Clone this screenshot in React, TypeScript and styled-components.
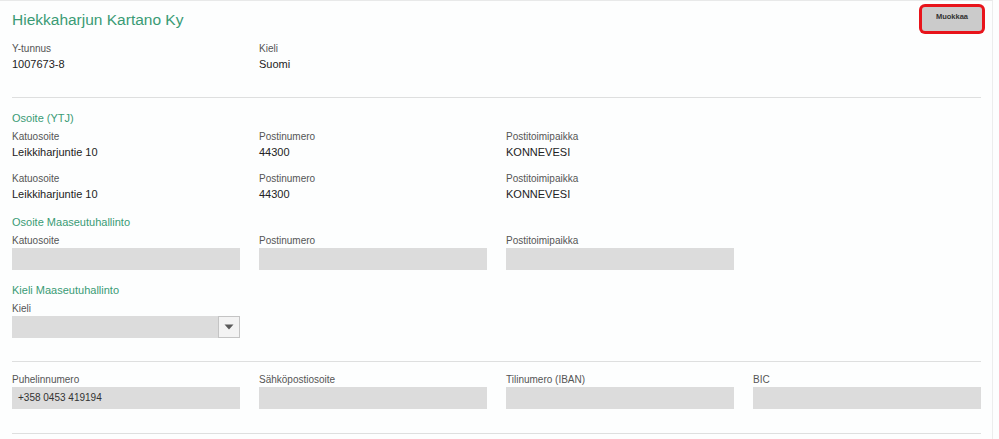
import React from "react";
import styled, { createGlobalStyle } from "styled-components";

const Global = createGlobalStyle`
  html, body { margin: 0; padding: 0; background: #fdfefe; }
  body { font-family: "Liberation Sans", Arial, sans-serif; }
`;

const GREEN = "#3a9b75";

const Page = styled.div`
  width: 969px;
  padding: 0 11px 0 12px;
  border-top: 1px solid #e8e9e9;
  border-right: 1px solid #eceded;
  min-height: 438px;
  background: #fdfefe;
`;

const Header = styled.div`
  display: flex;
  justify-content: space-between;
  align-items: flex-start;
  padding-top: 6px;
`;

const Title = styled.h1`
  margin: 3px 0 0 0;
  font-size: 15.5px;
  line-height: 20px;
  font-weight: normal;
  color: ${GREEN};
`;

const EditButton = styled.button`
  width: 60px;
  height: 24px;
  margin: 0 -1px 0 0;
  padding: 0 0 5px 0;
  border: none;
  border-radius: 3px;
  background: #cbcbcb;
  box-shadow: 0 0 0 3px #e8141b;
  font-family: "Liberation Sans", Arial, sans-serif;
  font-weight: bold;
  font-size: 7.5px;
  color: #333;
`;

const Grid = styled.div<{ $mt?: number }>`
  display: grid;
  grid-template-columns: repeat(4, 228px);
  column-gap: 19px;
  row-gap: 11px;
  margin-top: ${(p) => p.$mt ?? 0}px;
`;

const Field = styled.div`
  display: flex;
  flex-direction: column;
`;

const Label = styled.div`
  font-size: 10px;
  line-height: 15px;
  color: #555;
`;

const Value = styled.div`
  font-size: 11px;
  line-height: 16px;
  color: #222;
`;

const Divider = styled.div<{ $mt: number }>`
  height: 1px;
  background: #dedfdf;
  margin-top: ${(p) => p.$mt}px;
`;

const Heading = styled.h2`
  margin: 13px 0 4px 0;
  font-size: 11px;
  line-height: 14px;
  font-weight: normal;
  color: ${GREEN};
`;

const Input = styled.div`
  height: 22px;
  background: #dcdcdc;
  font-size: 10px;
  line-height: 22px;
  padding-left: 6px;
  color: #333;
`;

const Select = styled.div`
  height: 22px;
  background: #dcdcdc;
  display: flex;
  justify-content: flex-end;
`;

const ArrowBox = styled.div`
  width: 20px;
  height: 20px;
  border: 1px solid #c4c4c4;
  background: #f3f3f3;
  display: flex;
  align-items: center;
  justify-content: center;
`;

const Arrow = () => (
  <svg width="10" height="6" viewBox="0 0 10 6">
    <path d="M0.5 0.5 L9.5 0.5 L5 5.5 Z" fill="#5a5a5a" />
  </svg>
);

const ReadField = ({ label, value }: { label: string; value: string }) => (
  <Field>
    <Label>{label}</Label>
    <Value>{value}</Value>
  </Field>
);

const InputField = ({ label, value }: { label: string; value?: string }) => (
  <Field>
    <Label>{label}</Label>
    <Input>{value ?? ""}</Input>
  </Field>
);

export default function App() {
  return (
    <>
      <Global />
      <Page>
        <Header>
          <Title>Hiekkaharjun Kartano Ky</Title>
          <EditButton>Muokkaa</EditButton>
        </Header>
        <Grid $mt={10}>
          <ReadField label="Y-tunnus" value="1007673-8" />
          <ReadField label="Kieli" value="Suomi" />
        </Grid>
        <Divider $mt={25} />

        <Heading>Osoite (YTJ)</Heading>
        <Grid>
          <ReadField label="Katuosoite" value="Leikkiharjuntie 10" />
          <ReadField label="Postinumero" value="44300" />
          <ReadField label="Postitoimipaikka" value="KONNEVESI" />
          <div />
          <ReadField label="Katuosoite" value="Leikkiharjuntie 10" />
          <ReadField label="Postinumero" value="44300" />
          <ReadField label="Postitoimipaikka" value="KONNEVESI" />
        </Grid>

        <Heading>Osoite Maaseutuhallinto</Heading>
        <Grid>
          <InputField label="Katuosoite" />
          <InputField label="Postinumero" />
          <InputField label="Postitoimipaikka" />
        </Grid>

        <Heading>Kieli Maaseutuhallinto</Heading>
        <Grid>
          <Field>
            <Label>Kieli</Label>
            <Select>
              <ArrowBox>
                <Arrow />
              </ArrowBox>
            </Select>
          </Field>
        </Grid>

        <Divider $mt={23} />
        <Grid $mt={10}>
          <InputField label="Puhelinnumero" value="+358 0453 419194" />
          <InputField label="Sähköpostiosoite" />
          <InputField label="Tilinumero (IBAN)" />
          <InputField label="BIC" />
        </Grid>
        <Divider $mt={24} />
      </Page>
    </>
  );
}
